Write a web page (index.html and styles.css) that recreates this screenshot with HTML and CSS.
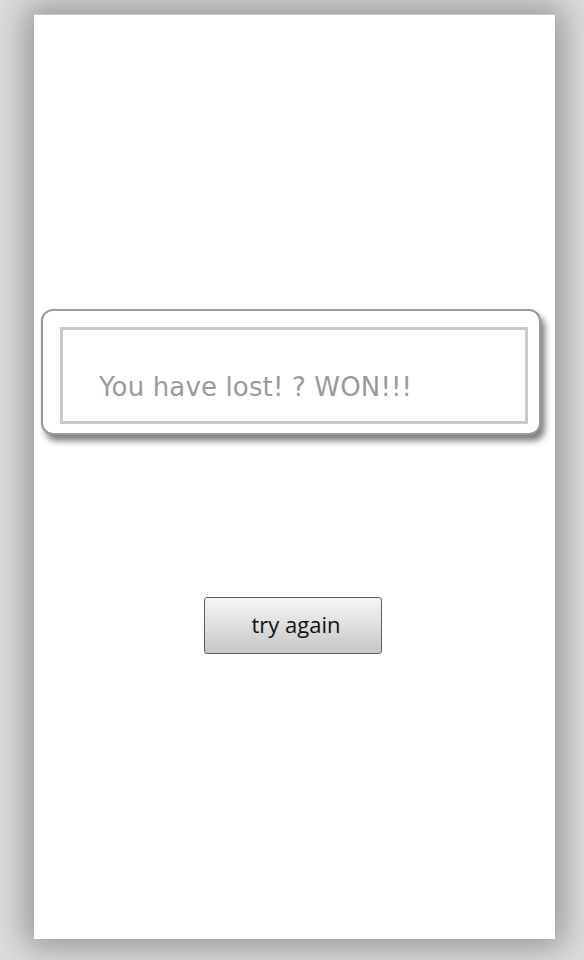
FILE: index.html
```html
<!DOCTYPE html>
<html>
<head>
<meta charset="utf-8">
<link rel="stylesheet" href="styles.css">
</head>
<body>
<div class="screen">
  <div class="dialog">
    <div class="field">You have lost! ? WON!!!</div>
  </div>
  <div class="actions">
    <button class="btn">try again</button>
  </div>
</div>
</body>
</html>
```
FILE: styles.css
```css
html, body {
  margin: 0;
  height: 960px;
  overflow: hidden;
}
body {
  background: #dcdcdc;
  padding: 14px 29px 21px 34px;
  box-sizing: border-box;
}
.screen {
  width: 521px;
  height: 925px;
  background: #fff;
  box-shadow: 0 0 30px 8px rgba(0,0,0,0.32);
  border-top: 1px solid #c8c8c8;
  box-sizing: border-box;
  display: flex;
  flex-direction: column;
  padding-top: 294px;
}
.dialog {
  margin-left: 7px;
  width: 500px;
  height: 126px;
  box-sizing: border-box;
  border: 2px solid #9a9a9a;
  border-radius: 12px;
  box-shadow: 4px 6px 6px rgba(0,0,0,0.5);
  padding: 16px 11px 9px 17px;
  background: #fff;
}
.field {
  height: 97px;
  box-sizing: border-box;
  border: 3px solid #c9c9c9;
  font-family: "DejaVu Sans", sans-serif;
  font-size: 26px;
  letter-spacing: 0.15px;
  color: #9a9a9a;
  padding-left: 36px;
  padding-top: 42px;
  line-height: 30px;
}
.actions {
  display: flex;
  padding-left: 170px;
  padding-top: 162px;
}
.btn {
  width: 178px;
  height: 57px;
  box-sizing: border-box;
  border: 1px solid #5e5e5e;
  border-radius: 3px;
  background: linear-gradient(#f6f6f6, #c6c6c6);
  font-family: "Open Sans", sans-serif;
  font-size: 22px;
  color: #111;
  padding: 0 0 4px 6px;
}
```
